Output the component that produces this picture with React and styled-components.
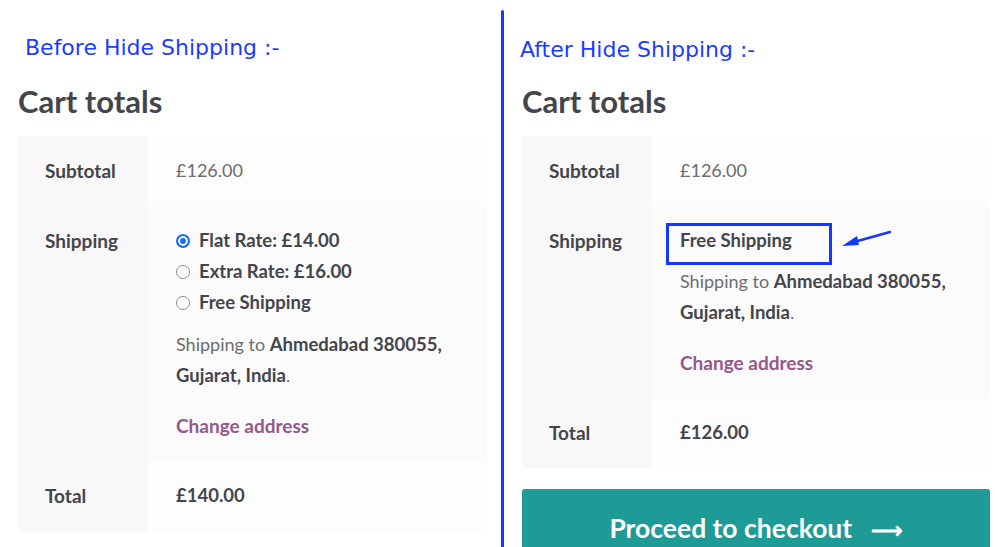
import React from 'react';
import styled, { createGlobalStyle } from 'styled-components';

const GlobalStyle = createGlobalStyle`
  html, body {
    margin: 0;
    padding: 0;
    background: #fff;
    overflow: hidden;
  }
  body {
    font-family: Lato, "Noto Sans", sans-serif;
    color: #6d6d6d;
  }
`;

const rates = [
  { label: 'Flat Rate: £14.00', checked: true },
  { label: 'Extra Rate: £16.00', checked: false },
  { label: 'Free Shipping', checked: false },
];

function Address() {
  return (
    <>
      <Destination>
        Shipping to <strong>Ahmedabad 380055,</strong> <strong>Gujarat, India</strong>.
      </Destination>
      <ChangeAddress href="#">Change address</ChangeAddress>
    </>
  );
}

function CartTotals({ shipping, total }) {
  return (
    <>
      <Title>Cart totals</Title>
      <Table>
        <tbody>
          <tr>
            <Label>Subtotal</Label>
            <Value>£126.00</Value>
          </tr>
          <tr>
            <Label>Shipping</Label>
            <Value $alt>
              {shipping}
              <Address />
            </Value>
          </tr>
          <tr>
            <Label>Total</Label>
            <Value>
              <Amount>{total}</Amount>
            </Value>
          </tr>
        </tbody>
      </Table>
    </>
  );
}

function Arrow() {
  return (
    <ArrowSvg width="52" height="20" viewBox="0 0 52 20">
      <line x1="50" y1="2" x2="14" y2="12" stroke="#1538ff" strokeWidth="2.5" strokeLinecap="round" />
      <polygon points="2,16 17,6 19,15" fill="#1538ff" />
    </ArrowSvg>
  );
}

export default function App() {
  return (
    <>
      <GlobalStyle />
      <Page>
        <Panel $width={469}>
          <Note $shift={7} $top={35}>Before Hide Shipping :-</Note>
          <CartTotals
            total="£140.00"
            shipping={
              <RateList>
                {rates.map((r) => (
                  <Rate key={r.label}>
                    <Radio $checked={r.checked} />
                    {r.label}
                  </Rate>
                ))}
              </RateList>
            }
          />
        </Panel>
        <Divider />
        <Panel $width={468}>
          <Note $shift={-2} $top={37}>After Hide Shipping :-</Note>
          <CartTotals
            total="£126.00"
            shipping={
              <Chosen>
                <Highlight>Free Shipping</Highlight>
                <Arrow />
              </Chosen>
            }
          />
          <Checkout>
            Proceed to checkout <span>⟶</span>
          </Checkout>
        </Panel>
      </Page>
    </>
  );
}

const Page = styled.div`
  display: flex;
  width: 1000px;
  height: 547px;
  padding-left: 18px;
  box-sizing: border-box;
  overflow: hidden;
`;

const Panel = styled.div`
  width: ${(p) => p.$width}px;
  display: flex;
  flex-direction: column;

  & > * {
    flex-shrink: 0;
  }
`;

const Divider = styled.div`
  width: 3px;
  margin: 10px 18px 0 14px;
  background: #1538ff;
  border-radius: 2px 2px 0 0;
`;

const Note = styled.div`
  height: 81px;
  box-sizing: border-box;
  padding-top: ${(p) => p.$top}px;
  text-indent: ${(p) => p.$shift}px;
  font-family: "DejaVu Sans", Verdana, sans-serif;
  font-size: 22px;
  line-height: 26px;
  color: #1a3cff;
`;

const Title = styled.h2`
  margin: 0;
  height: 55px;
  font-family: Lato, sans-serif;
  font-size: 31px;
  font-weight: 700;
  line-height: 40px;
  color: #43454b;
`;

const Table = styled.table`
  width: 100%;
  border-collapse: collapse;
  border-spacing: 0;
  font-size: 18px;
  line-height: 31px;
`;

const Label = styled.th`
  width: 130px;
  box-sizing: border-box;
  padding: 19px 10px 20px 27px;
  background: #f8f8f8;
  text-align: left;
  vertical-align: top;
  font-size: 19px;
  font-weight: 700;
  color: #43454b;
`;

const Value = styled.td`
  padding: 19px 20px 20px 28px;
  background: ${(p) => (p.$alt ? '#fbfbfb' : '#fdfdfd')};
  vertical-align: top;
  color: #6d6d6d;

  strong {
    font-size: 18.5px;
    font-weight: 700;
    color: #43454b;
  }
`;

const Amount = styled.strong`
  font-weight: 700;
  color: #43454b;
`;

const RateList = styled.ul`
  list-style: none;
  margin: 0 0 11px;
  padding: 0;
`;

const Rate = styled.li`
  display: flex;
  align-items: center;
  gap: 9px;
  font-size: 18.5px;
  font-weight: 700;
  color: #43454b;
`;

const Radio = styled.span`
  width: 14px;
  height: 14px;
  box-sizing: border-box;
  border-radius: 50%;
  border: ${(p) => (p.$checked ? '2px solid #1a6dff' : '1px solid #8a8a8a')};
  background: ${(p) => (p.$checked ? '#1a6dff' : '#fff')};
  box-shadow: ${(p) => (p.$checked ? 'inset 0 0 0 2px #fff' : 'none')};
  flex-shrink: 0;
`;

const Chosen = styled.div`
  position: relative;
  margin-bottom: 10px;
  font-size: 18.5px;
  font-weight: 700;
  color: #43454b;
`;

const Highlight = styled.span`
  position: relative;

  &::after {
    content: '';
    position: absolute;
    left: -14px;
    right: -40px;
    top: -6px;
    bottom: -14px;
    border: 3px solid #1538ff;
  }
`;

const ArrowSvg = styled.svg`
  position: absolute;
  left: 160px;
  top: 5px;
`;

const Destination = styled.p`
  margin: 0;
  max-width: 290px;
`;

const ChangeAddress = styled.a`
  display: block;
  margin-top: 19px;
  font-size: 19px;
  font-weight: 700;
  color: #96588a;
  text-decoration: none;
`;

const Checkout = styled.button`
  margin-top: 21px;
  width: 100%;
  height: 78px;
  border: none;
  border-radius: 3px;
  background: #1e9b97;
  color: #fff;
  font-family: Lato, sans-serif;
  font-size: 26.5px;
  font-weight: 700;

  span {
    margin-left: 12px;
    font-size: 22px;
  }
`;
